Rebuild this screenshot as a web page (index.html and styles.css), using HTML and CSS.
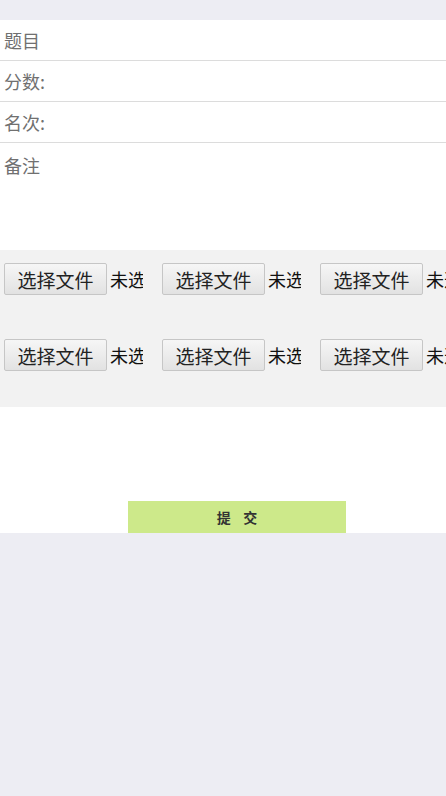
FILE: index.html
```html
<!DOCTYPE html>
<html lang="zh">
<head>
<meta charset="utf-8">
<link rel="stylesheet" href="styles.css">
</head>
<body>
<div class="top"></div>
<div class="form">
  <div class="row"><span class="label">题目</span></div>
  <div class="row"><span class="label">分数:</span></div>
  <div class="row"><span class="label">名次:</span></div>
  <div class="note"><span class="label">备注</span></div>
  <div class="files">
    <div class="file-row">
      <div class="file"><span class="btn">选择文件</span><span class="none">未选择任何文件</span></div>
      <div class="file"><span class="btn">选择文件</span><span class="none">未选择任何文件</span></div>
      <div class="file"><span class="btn">选择文件</span><span class="none">未选择任何文件</span></div>
    </div>
    <div class="file-row">
      <div class="file"><span class="btn">选择文件</span><span class="none">未选择任何文件</span></div>
      <div class="file"><span class="btn">选择文件</span><span class="none">未选择任何文件</span></div>
      <div class="file"><span class="btn">选择文件</span><span class="none">未选择任何文件</span></div>
    </div>
  </div>
  <div class="submit-area">
    <div class="submit">提&nbsp;&nbsp;&nbsp;&nbsp;交</div>
  </div>
</div>
</body>
</html>
```
FILE: styles.css
```css
html, body {
  margin: 0;
  padding: 0;
}
body {
  background: #ededf3;
  font-family: "Noto Sans CJK SC", "Noto Sans", sans-serif;
  width: 446px;
  overflow: hidden;
}
.top {
  height: 20px;
}
.form {
  background: #ffffff;
}
.row {
  height: 40px;
  border-bottom: 1px solid #dcdcdc;
  display: flex;
  align-items: center;
}
.label {
  padding-left: 4px;
  font-size: 18px;
  color: #707070;
  line-height: 1;
}
.note {
  height: 107px;
  box-sizing: border-box;
  padding-top: 11px;
}
.files {
  background: #f2f2f2;
  height: 157px;
  box-sizing: border-box;
  padding: 13px 0 0 4px;
  display: flex;
  flex-direction: column;
  gap: 44px;
  overflow: hidden;
}
.file-row {
  display: flex;
  gap: 19px;
  white-space: nowrap;
}
.file {
  flex: none;
  width: 139px;
  overflow: hidden;
  display: flex;
  align-items: center;
}
.btn {
  flex: none;
  box-sizing: border-box;
  width: 103px;
  height: 32px;
  border: 1px solid #c6c6c6;
  border-radius: 2px;
  background: linear-gradient(#f6f6f6, #e2e2e2);
  font-size: 19px;
  color: #222;
  display: flex;
  align-items: center;
  justify-content: center;
}
.none {
  flex: 1;
  min-width: 0;
  overflow: hidden;
  margin-left: 3px;
  font-size: 18px;
  color: #111;
}
.submit-area {
  height: 126px;
  display: flex;
  align-items: flex-end;
  justify-content: center;
  padding-left: 22px;
  background: #ffffff;
}
.submit {
  width: 218px;
  height: 32px;
  margin-left: 6px;
  background: #cde98a;
  color: #333;
  font-size: 14px;
  font-weight: bold;
  display: flex;
  align-items: center;
  justify-content: center;
}
```
